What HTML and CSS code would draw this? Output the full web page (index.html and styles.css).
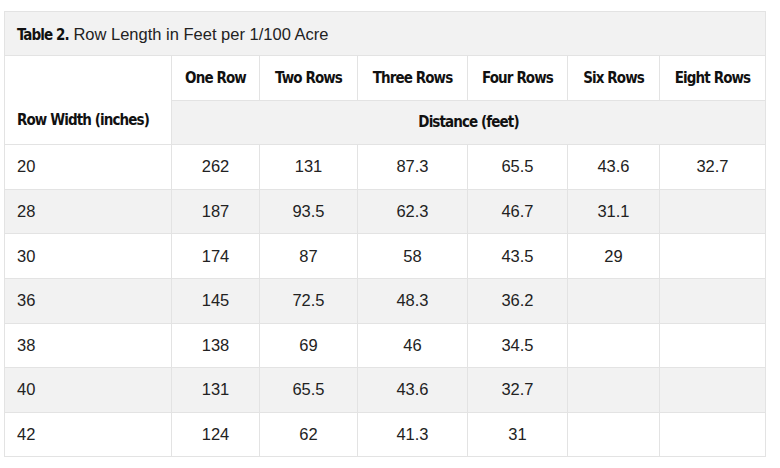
FILE: index.html
```html
<!DOCTYPE html>
<html lang="en">
<head>
<meta charset="utf-8">
<title>Table 2. Row Length in Feet per 1/100 Acre</title>
<link rel="stylesheet" href="styles.css">
</head>
<body>
<div class="wrap">
<table class="data">
  <caption><b>Table 2.</b> Row Length in Feet per 1/100 Acre</caption>
  <colgroup>
    <col class="c1"><col class="c2"><col class="c3"><col class="c4"><col class="c5"><col class="c6"><col class="c7">
  </colgroup>
  <thead>
    <tr class="h1">
      <th rowspan="2" class="rw">Row Width (inches)</th>
      <th>One Row</th><th>Two Rows</th><th>Three Rows</th><th>Four Rows</th><th>Six Rows</th><th>Eight Rows</th>
    </tr>
    <tr class="h2">
      <th colspan="6">Distance (feet)</th>
    </tr>
  </thead>
  <tbody>
    <tr><td>20</td><td>262</td><td>131</td><td>87.3</td><td>65.5</td><td>43.6</td><td>32.7</td></tr>
    <tr class="alt"><td>28</td><td>187</td><td>93.5</td><td>62.3</td><td>46.7</td><td>31.1</td><td></td></tr>
    <tr><td>30</td><td>174</td><td>87</td><td>58</td><td>43.5</td><td>29</td><td></td></tr>
    <tr class="alt"><td>36</td><td>145</td><td>72.5</td><td>48.3</td><td>36.2</td><td></td><td></td></tr>
    <tr><td>38</td><td>138</td><td>69</td><td>46</td><td>34.5</td><td></td><td></td></tr>
    <tr class="alt"><td>40</td><td>131</td><td>65.5</td><td>43.6</td><td>32.7</td><td></td><td></td></tr>
    <tr><td>42</td><td>124</td><td>62</td><td>41.3</td><td>31</td><td></td><td></td></tr>
  </tbody>
</table>
</div>
</body>
</html>
```
FILE: styles.css
```css
html, body {
  margin: 0;
  padding: 0;
  background: #ffffff;
}
.wrap {
  padding: 11px 0 0 4px;
}
.data {
  border-collapse: collapse;
  table-layout: fixed;
  width: 761px;
  font-family: "Liberation Sans", Arial, sans-serif;
  font-size: 16.5px;
  color: #222222;
}
.data caption {
  caption-side: top;
  text-align: left;
  background: #f2f2f2;
  border: 1px solid #e3e3e3;
  border-bottom: none;
  height: 44px;
  line-height: 44px;
  padding: 0 0 0 12px;
  color: #222222;
  box-sizing: border-box;
  white-space: nowrap;
}
.data caption b,
.data th {
  font-family: "DejaVu Sans Condensed", "DejaVu Sans", sans-serif;
  font-stretch: condensed;
  font-weight: 700;
  font-size: 15px;
  letter-spacing: -0.9px;
  color: #111111;
  white-space: nowrap;
}
.c1 { width: 167px; }
.c2 { width: 88px; }
.c3 { width: 98px; }
.c4 { width: 110px; }
.c5 { width: 100px; }
.c6 { width: 92px; }
.c7 { width: 106px; }
.data th,
.data td {
  border: 1px solid #e3e3e3;
  height: 44.6px;
  padding: 0;
  text-align: center;
  vertical-align: middle;
  box-sizing: border-box;
}
.data th.rw {
  text-align: left;
  padding-left: 12px;
  vertical-align: bottom;
  padding-bottom: 15px;
  background: #ffffff;
}
.h1 th { background: #ffffff; }
.h2 th { background: #f2f2f2; }
.data td:first-child {
  text-align: left;
  padding-left: 12px;
}
.alt td { background: #f2f2f2; }
```
